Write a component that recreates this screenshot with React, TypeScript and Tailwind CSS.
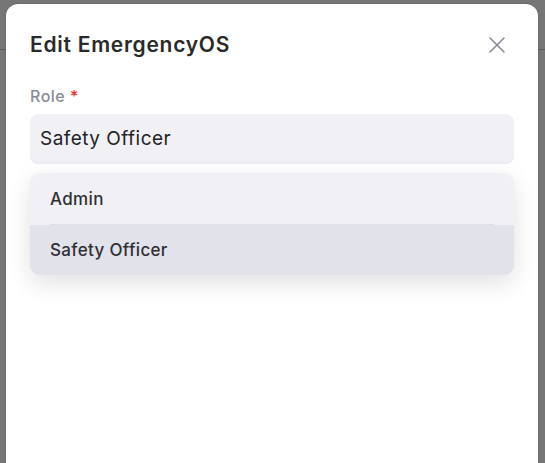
import { X } from "lucide-react";

const options = ["Admin", "Safety Officer"];

export default function App() {
  const selected = "Safety Officer";

  return (
    <div className="relative w-[545px] h-[463px] overflow-hidden bg-[#767676] font-['Inter',sans-serif]">
      {/* page behind the overlay */}
      <div className="h-[50px] border-b border-[#5e5e5e]" />

      {/* modal */}
      <div className="absolute left-[6px] top-[4px] w-[532px] h-[480px] rounded-t-[12px] bg-white px-6 pt-[27px] shadow-[0_0_2px_rgba(0,0,0,0.25)]">
        <div className="flex items-center justify-between">
          <h2 className="text-[21px] leading-[28px] font-semibold tracking-[0.035em] text-[#2a2a2a]">
            Edit EmergencyOS
          </h2>
          <button className="mr-[3px] text-[#8a8a96]">
            <X size={28} strokeWidth={1.3} />
          </button>
        </div>

        <label className="mt-[25px] block text-[16px] leading-[24px] font-medium tracking-[0.03em] text-[#8b8b99]">
          Role <span className="text-[#e5312f]">*</span>
        </label>

        <div className="mt-[6px] flex h-[50px] items-center rounded-[8px] bg-[#f1f1f5] px-[10px] pt-px shadow-[inset_0_-2px_3px_rgba(0,0,0,0.025)]">
          <span className="text-[19px] tracking-[0.025em] text-[#222228]">{selected}</span>
        </div>

        <div className="mt-[9px] overflow-hidden rounded-[10px] bg-[#f1f1f5] shadow-[0_8px_24px_rgba(0,0,0,0.12)]">
          {options.map((opt, i) => (
            <div key={opt}>
              {i > 0 && <div className="mx-5 h-px bg-[#e0e0e7]" />}
              <div
                className={`flex items-center px-5 pt-[2px] text-[17px] font-medium tracking-[0.02em] text-[#2f2f35] ${
                  opt === selected ? "h-[50px] bg-[#e2e2ea]" : "h-[51px]"
                }`}
              >
                {opt}
              </div>
            </div>
          ))}
        </div>
      </div>
    </div>
  );
}
